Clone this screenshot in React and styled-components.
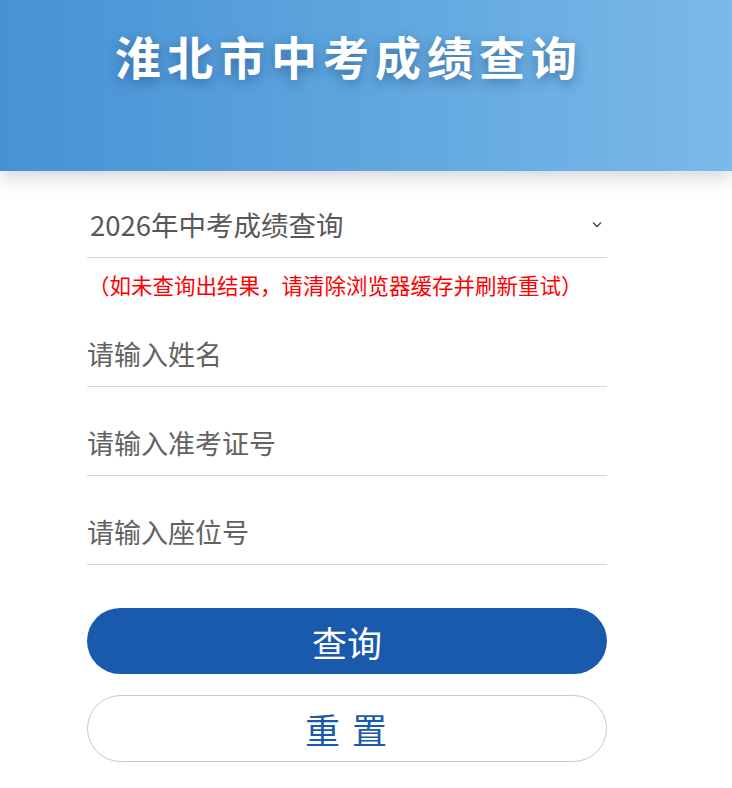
import React from "react";
import styled, { createGlobalStyle } from "styled-components";

const GlobalStyle = createGlobalStyle`
  html, body {
    margin: 0;
    padding: 0;
    background: #ffffff;
    font-family: "Noto Sans CJK SC", "Noto Sans", sans-serif;
  }
  * { box-sizing: border-box; }
`;

const Page = styled.div`
  width: 732px;
  min-height: 788px;
  background: #fff;
`;

const Header = styled.header`
  height: 171px;
  background: linear-gradient(to right, #4791d5 0%, #5ea6de 50%, #7bb9e8 100%);
  box-shadow: 0 6px 18px rgba(40, 60, 90, 0.22);
  padding-top: 25px;
`;

const Title = styled.h1`
  margin: 0 0 0 87px;
  width: 520px;
  padding-left: 4px;
  text-align: center;
  color: #fff;
  font-size: 46px;
  line-height: 60px;
  font-weight: 700;
  letter-spacing: 6px;
  text-shadow: 0 4px 12px rgba(20, 50, 100, 0.45);
`;

const Form = styled.form`
  width: 520px;
  margin-left: 87px;
  padding-top: 26px;
  display: flex;
  flex-direction: column;
`;

const SelectBox = styled.div`
  position: relative;
  height: 61px;
  border-bottom: 1px solid #d6d6d6;
`;

const Select = styled.select`
  appearance: none;
  -webkit-appearance: none;
  width: 100%;
  height: 100%;
  border: none;
  outline: none;
  background: transparent;
  padding: 0 0 6px 3px;
  font-family: inherit;
  font-size: 27.5px;
  color: #585858;
`;

const Chevron = styled.svg`
  position: absolute;
  right: 5px;
  top: 24px;
  width: 10px;
  height: 7px;
  pointer-events: none;
`;

const Note = styled.p`
  margin: 13px 0 0;
  padding-left: 1px;
  line-height: 27px;
  font-size: 21.5px;
  color: #ff0000;
`;

const Field = styled.input`
  margin-top: 28px;
  height: 61px;
  border: none;
  border-bottom: 1px solid #d6d6d6;
  outline: none;
  padding: 0 0 5px;
  font-family: inherit;
  font-size: 27px;
  color: #333;
  background: transparent;

  &::placeholder {
    color: #626262;
  }
`;

const Button = styled.button`
  height: ${(p) => (p.$primary ? "66px" : "67px")};
  margin-top: ${(p) => (p.$primary ? "43px" : "21px")};
  border-radius: 34px;
  border: ${(p) => (p.$primary ? "none" : "1px solid #c8c8c8")};
  background: ${(p) => (p.$primary ? "#1a5aad" : "#ffffff")};
  color: ${(p) => (p.$primary ? "#ffffff" : "#1a5aad")};
  font-family: inherit;
  font-size: 35px;
  letter-spacing: ${(p) => (p.$primary ? "0" : "2px")};
  cursor: pointer;
`;

export default function App() {
  return (
    <Page>
      <GlobalStyle />
      <Header>
        <Title>淮北市中考成绩查询</Title>
      </Header>
      <Form onSubmit={(e) => e.preventDefault()}>
        <SelectBox>
          <Select defaultValue="2026">
            <option value="2026">2026年中考成绩查询</option>
          </Select>
          <Chevron viewBox="0 0 10 7">
            <path d="M1 1.5 L5 5.5 L9 1.5" fill="none" stroke="#555" strokeWidth="1.6" />
          </Chevron>
        </SelectBox>
        <Note>（如未查询出结果，请清除浏览器缓存并刷新重试）</Note>
        <Field placeholder="请输入姓名" />
        <Field placeholder="请输入准考证号" />
        <Field placeholder="请输入座位号" />
        <Button type="submit" $primary>查询</Button>
        <Button type="reset">重 置</Button>
      </Form>
    </Page>
  );
}
